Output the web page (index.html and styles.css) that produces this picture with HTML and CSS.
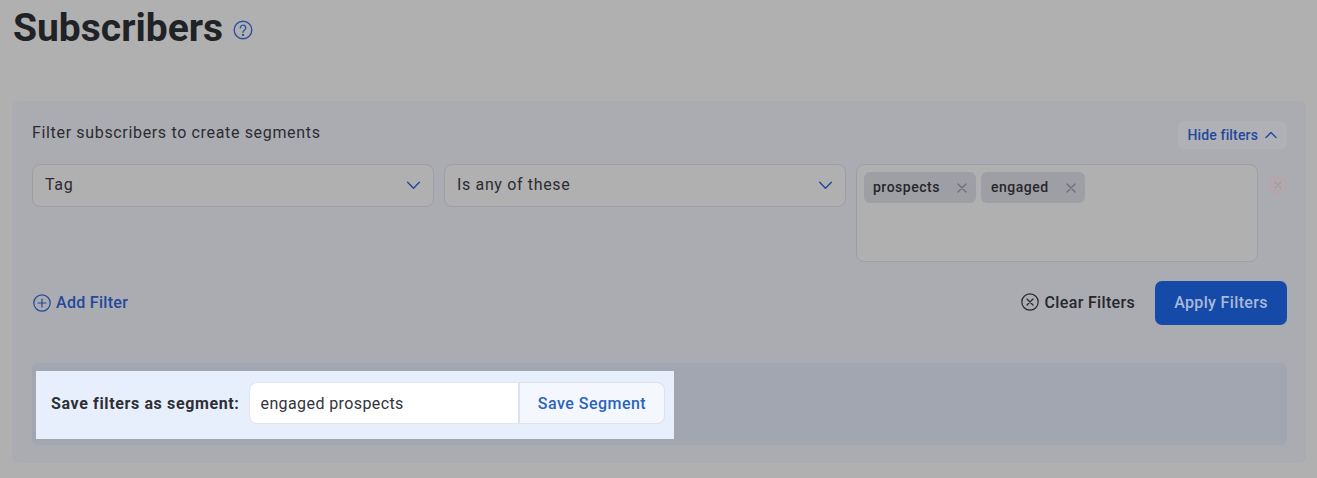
FILE: index.html
```html
<!DOCTYPE html>
<html lang="en">
<head>
<meta charset="utf-8">
<title>Subscribers</title>
<link rel="stylesheet" href="styles.css">
</head>
<body>
<header class="page-head">
  <h1 class="title">Subscribers</h1>
  <svg class="help" viewBox="0 0 20 20" width="20" height="20" fill="none" stroke="currentColor" stroke-width="1.4" stroke-linecap="round"><circle cx="10" cy="10" r="8.8"/><path d="M7.3 7.8a2.7 2.7 0 1 1 4.3 2.2c-1 .7-1.6 1.2-1.6 2.3"/><circle cx="10" cy="14.9" r=".5" fill="currentColor"/></svg>
</header>
<main class="panel">
  <div class="panel-top">
    <p class="panel-label">Filter subscribers to create segments</p>
    <button class="hide-btn">Hide filters
      <svg viewBox="0 0 12 8" width="12" height="8" fill="none" stroke="currentColor" stroke-width="1.4" stroke-linecap="round" stroke-linejoin="round"><path d="M1 6.5 6 1.5l5 5"/></svg>
    </button>
  </div>
  <div class="filter-row">
    <div class="select"><span>Tag</span><svg viewBox="0 0 16 10" width="15" height="9" fill="none" stroke="currentColor" stroke-width="1.6" stroke-linecap="round" stroke-linejoin="round"><path d="M1.5 1.5 8 8l6.5-6.5"/></svg></div>
    <div class="select"><span>Is any of these</span><svg viewBox="0 0 16 10" width="15" height="9" fill="none" stroke="currentColor" stroke-width="1.6" stroke-linecap="round" stroke-linejoin="round"><path d="M1.5 1.5 8 8l6.5-6.5"/></svg></div>
    <div class="tags">
      <span class="tag tag-a"><span class="tag-text">prospects</span><svg viewBox="0 0 10 10" width="10" height="10" fill="none" stroke="currentColor" stroke-width="1.3" stroke-linecap="round"><path d="M1 1l8 8M9 1l-8 8"/></svg></span>
      <span class="tag tag-b"><span class="tag-text">engaged</span><svg viewBox="0 0 10 10" width="10" height="10" fill="none" stroke="currentColor" stroke-width="1.3" stroke-linecap="round"><path d="M1 1l8 8M9 1l-8 8"/></svg></span>
    </div>
    <svg class="remove" viewBox="0 0 18 18" width="18" height="18" fill="none" stroke="currentColor" stroke-width="1.3" stroke-linecap="round"><circle cx="9" cy="9" r="7.8"/><path class="remove-x" d="M6 6l6 6M12 6l-6 6"/></svg>
  </div>
  <div class="actions">
    <a class="add-filter"><svg viewBox="0 0 18 18" width="18" height="18" fill="none" stroke="currentColor" stroke-width="1.2" stroke-linecap="round"><circle cx="9" cy="9" r="8.2"/><path d="M9 5v8M5 9h8"/></svg>Add Filter</a>
    <div class="actions-right">
      <a class="clear"><svg viewBox="0 0 18 18" width="18" height="18" fill="none" stroke="currentColor" stroke-width="1.2" stroke-linecap="round"><circle cx="9" cy="9" r="8.2"/><path d="M6 6l6 6M12 6l-6 6"/></svg>Clear Filters</a>
      <button class="apply">Apply Filters</button>
    </div>
  </div>
  <div class="segment-bar">
    <div class="segment-focus">
      <label class="segment-label">Save filters as segment:</label>
      <div class="segment-group">
        <span class="segment-input">engaged prospects</span>
        <button class="segment-save">Save Segment</button>
      </div>
    </div>
  </div>
</main>
</body>
</html>
```
FILE: styles.css
```css
* { box-sizing: border-box; }
html, body { margin: 0; height: 478px; overflow: hidden; }
body { background: #b0b0b0; font-family: Roboto, "Liberation Sans", sans-serif; color: #26272b; padding: 0 11px 0 12px; }
.page-head { display: flex; align-items: center; height: 101px; padding: 0 0 45px 1px; gap: 10px; }
.title { margin: 0; font-size: 39px; line-height: 56px; font-weight: 700; color: #212226; }
.help { color: #2b52a0; margin-top: 3px; }
.panel { background: #abacb2; border-radius: 6px; height: 362px; padding: 19px 19px 0 20px; }
.panel-top { display: flex; justify-content: space-between; align-items: flex-start; height: 44px; }
.panel-label { margin: 3px 0 0; font-size: 16px; line-height: 19px; letter-spacing: .66px; color: #2b2c31; }
.hide-btn { display: flex; align-items: center; gap: 7px; height: 28px; margin-top: 1px; padding: 0 10px 0 9px; border: 0; border-radius: 6px; background: #b0b1b6; color: #22489c; font: 500 14px Roboto, sans-serif; letter-spacing: .15px; }
.filter-row { display: flex; align-items: flex-start; gap: 10px; height: 117px; }
.select { flex: 0 0 402px; display: flex; justify-content: space-between; align-items: center; height: 43px; padding: 0 12px; background: #b0b0b0; border: 1px solid #9d9ea6; border-radius: 8px; font-size: 16px; letter-spacing: .65px; color: #2b2c31; }
.select span { margin-bottom: 2px; }
.select svg { color: #22489c; }
.tags { flex: 0 0 402px; height: 98px; display: flex; align-items: flex-start; gap: 5px; padding: 7px; background: #b0b0b0; border: 1px solid #9d9ea6; border-radius: 8px; }
.tag { display: flex; justify-content: space-between; align-items: center; height: 31px; padding: 0 9px; background: #9e9fa5; border-radius: 6px; font-size: 14px; font-weight: 500; letter-spacing: .5px; color: #26272b; }
.tag-text { margin-bottom: 2px; }
.tag svg { color: #6c6d78; }
.tag-a { width: 112px; }
.tag-b { width: 104px; padding-left: 10px; }
.remove { flex: none; color: #c49ea1; margin: 12px 0 0 1px; }
.remove-x { stroke: #b0959b; }
.actions { display: flex; justify-content: space-between; align-items: center; height: 44px; }
.add-filter, .clear { display: flex; align-items: center; gap: 5px; font-size: 16px; font-weight: 500; margin-bottom: 2px; }
.add-filter { color: #22489c; letter-spacing: .3px; }
.add-filter svg { margin: 2px 0 0 1px; }
.clear { color: #26272b; letter-spacing: .33px; gap: 6px; margin-right: 1px; }
.actions-right { display: flex; align-items: center; gap: 19px; }
.apply { width: 132px; height: 44px; padding: 0 0 2px; border: 0; border-radius: 7px; background: #154aa8; color: #a9b9d9; font: 500 16px Roboto, sans-serif; letter-spacing: .35px; }
.segment-bar { margin-top: 38px; height: 82px; background: #a1a6b1; border-radius: 6px; padding: 8px 0 0 4px; }
.segment-focus { display: flex; align-items: center; gap: 9px; width: 638px; height: 68px; padding: 0 0 4px 15px; background: #e8effc; }
.segment-label { font-size: 16px; font-weight: 700; letter-spacing: .63px; color: #2e3035; }
.segment-group { display: flex; height: 42px; }
.segment-input { display: flex; align-items: center; width: 269px; padding-left: 11px; background: #fff; border: 1px solid #e2e5ee; border-right: 0; border-radius: 8px 0 0 8px; font-size: 16px; letter-spacing: .4px; color: #33343a; }
.segment-save { width: 147px; padding-left: 7px; background: #f4f7fe; border: 1px solid #dde1ec; border-left-width: 2px; border-radius: 0 8px 8px 0; color: #2a64bd; font: 500 16px Roboto, sans-serif; letter-spacing: .47px; }
```
